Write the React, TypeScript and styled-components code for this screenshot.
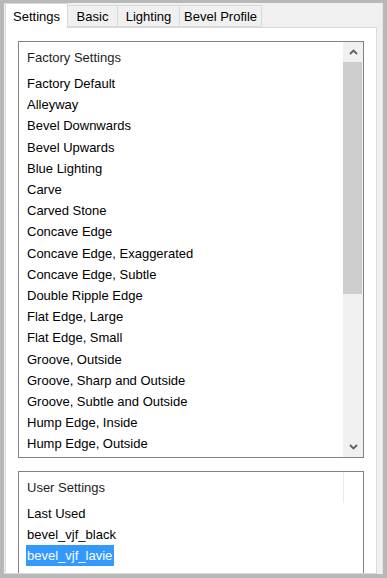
import React from "react";
import styled, { createGlobalStyle } from "styled-components";

const Global = createGlobalStyle`
  html, body { margin: 0; padding: 0; background: #b8b8b8; }
  body { font-family: "Liberation Sans", Arial, sans-serif; }
`;

const Frame = styled.div`
  width: 387px;
  height: 578px;
  box-sizing: border-box;
  background: #b8b8b8;
  padding: 3px 4px 4px 4px;
  display: flex;
`;

const Dialog = styled.div`
  flex: 1;
  background: #f0f0f0;
  display: flex;
  flex-direction: column;
  padding: 0 0 0 1px;
  box-sizing: border-box;
  border-right: 1px solid #e4e4e4;
  overflow: hidden;
`;

const TabStrip = styled.div`
  display: flex;
  align-items: flex-end;
  height: 24px;
  position: relative;
  z-index: 1;
`;

const Tab = styled.div<{ $active?: boolean; $first?: boolean; $w: number }>`
  box-sizing: border-box;
  height: ${(p) => (p.$active ? 25 : 22)}px;
  margin-bottom: ${(p) => (p.$active ? -1 : 0)}px;
  padding: 0 ${(p) => (p.$active ? 8 : 6)}px;
  width: ${(p) => p.$w}px;
  background: ${(p) => (p.$active ? "#ffffff" : "#f0f0f0")};
  border: 1px solid #d9d9d9;
  border-bottom: ${(p) => (p.$active ? "none" : "1px solid #d9d9d9")};
  border-left-width: ${(p) => (p.$first || p.$active ? 1 : 0)}px;
  font-size: 13px;
  color: #000;
  display: flex;
  align-items: center;
  justify-content: center;
  white-space: nowrap;
`;

const Panel = styled.div`
  flex: 1;
  width: 372px;
  box-sizing: border-box;
  background: #fff;
  border: 1px solid #d9d9d9;
  padding: 13px 12px 0 12px;
  display: flex;
  flex-direction: column;
  gap: 13px;
  overflow: hidden;
`;

const ListBox = styled.div<{ $h: number }>`
  flex: 0 0 ${(p) => p.$h}px;
  box-sizing: border-box;
  border: 1px solid #828282;
  display: flex;
  background: #fff;
  overflow: hidden;
`;

const ListBody = styled.div`
  flex: 1;
  display: flex;
  flex-direction: column;
  min-width: 0;
`;

const Header = styled.div<{ $divider?: boolean }>`
  height: 31px;
  flex: 0 0 31px;
  display: flex;
  align-items: center;
  padding-left: 8px;
  font-size: 13px;
  color: #1e1e1e;
  border-right: ${(p) => (p.$divider ? "1px solid #eaeaea" : "none")};
  margin-right: ${(p) => (p.$divider ? 19 : 0)}px;
`;

const Row = styled.div`
  height: 21.2px;
  flex: 0 0 21.2px;
  display: flex;
  align-items: center;
  font-size: 13px;
  color: #000;
  padding-left: 7px;
`;

const RowLabel = styled.span<{ $selected?: boolean }>`
  display: inline-block;
  line-height: 21px;
  padding: 0 2px 0 1px;
  background: ${(p) => (p.$selected ? "#3399ff" : "transparent")};
  color: ${(p) => (p.$selected ? "#fff" : "#000")};
`;

const ScrollBar = styled.div`
  width: 20px;
  flex: 0 0 20px;
  display: flex;
  flex-direction: column;
  background: #f0f0f0;
`;

const ScrollButton = styled.div`
  height: 20px;
  flex: 0 0 20px;
  display: flex;
  align-items: center;
  justify-content: center;
  background: #f0f0f0;
`;

const Thumb = styled.div`
  height: 232px;
  flex: 0 0 232px;
  margin: 0 1px 0 0;
  background: #cdcdcd;
`;

const Track = styled.div`
  flex: 1;
`;

const Chevron = ({ up }: { up?: boolean }) => (
  <svg width="9" height="6" viewBox="0 0 9 6">
    <path
      d={up ? "M1 5 L4.5 1.5 L8 5" : "M1 1 L4.5 4.5 L8 1"}
      fill="none"
      stroke="#606060"
      strokeWidth="1.8"
    />
  </svg>
);

const factory = [
  "Factory Default",
  "Alleyway",
  "Bevel Downwards",
  "Bevel Upwards",
  "Blue Lighting",
  "Carve",
  "Carved Stone",
  "Concave Edge",
  "Concave Edge, Exaggerated",
  "Concave Edge, Subtle",
  "Double Ripple Edge",
  "Flat Edge, Large",
  "Flat Edge, Small",
  "Groove, Outside",
  "Groove, Sharp and Outside",
  "Groove, Subtle and Outside",
  "Hump Edge, Inside",
  "Hump Edge, Outside",
];

const user = ["Last Used", "bevel_vjf_black", "bevel_vjf_lavie"];

const tabs = [
  { label: "Settings", w: 63 },
  { label: "Basic", w: 50 },
  { label: "Lighting", w: 62 },
  { label: "Bevel Profile", w: 82 },
];

export default function App() {
  return (
    <>
      <Global />
      <Frame>
        <Dialog>
          <TabStrip>
            {tabs.map((t, i) => (
              <Tab key={t.label} $active={i === 0} $first={i === 0} $w={t.w}>
                {t.label}
              </Tab>
            ))}
          </TabStrip>
          <Panel>
            <ListBox $h={417}>
              <ListBody>
                <Header>Factory Settings</Header>
                {factory.map((f) => (
                  <Row key={f}>
                    <RowLabel>{f}</RowLabel>
                  </Row>
                ))}
              </ListBody>
              <ScrollBar>
                <ScrollButton>
                  <Chevron up />
                </ScrollButton>
                <Thumb />
                <Track />
                <ScrollButton>
                  <Chevron />
                </ScrollButton>
              </ScrollBar>
            </ListBox>
            <ListBox $h={120}>
              <ListBody>
                <Header $divider>User Settings</Header>
                {user.map((u, i) => (
                  <Row key={u}>
                    <RowLabel $selected={i === 2}>{u}</RowLabel>
                  </Row>
                ))}
              </ListBody>
            </ListBox>
          </Panel>
        </Dialog>
      </Frame>
    </>
  );
}
